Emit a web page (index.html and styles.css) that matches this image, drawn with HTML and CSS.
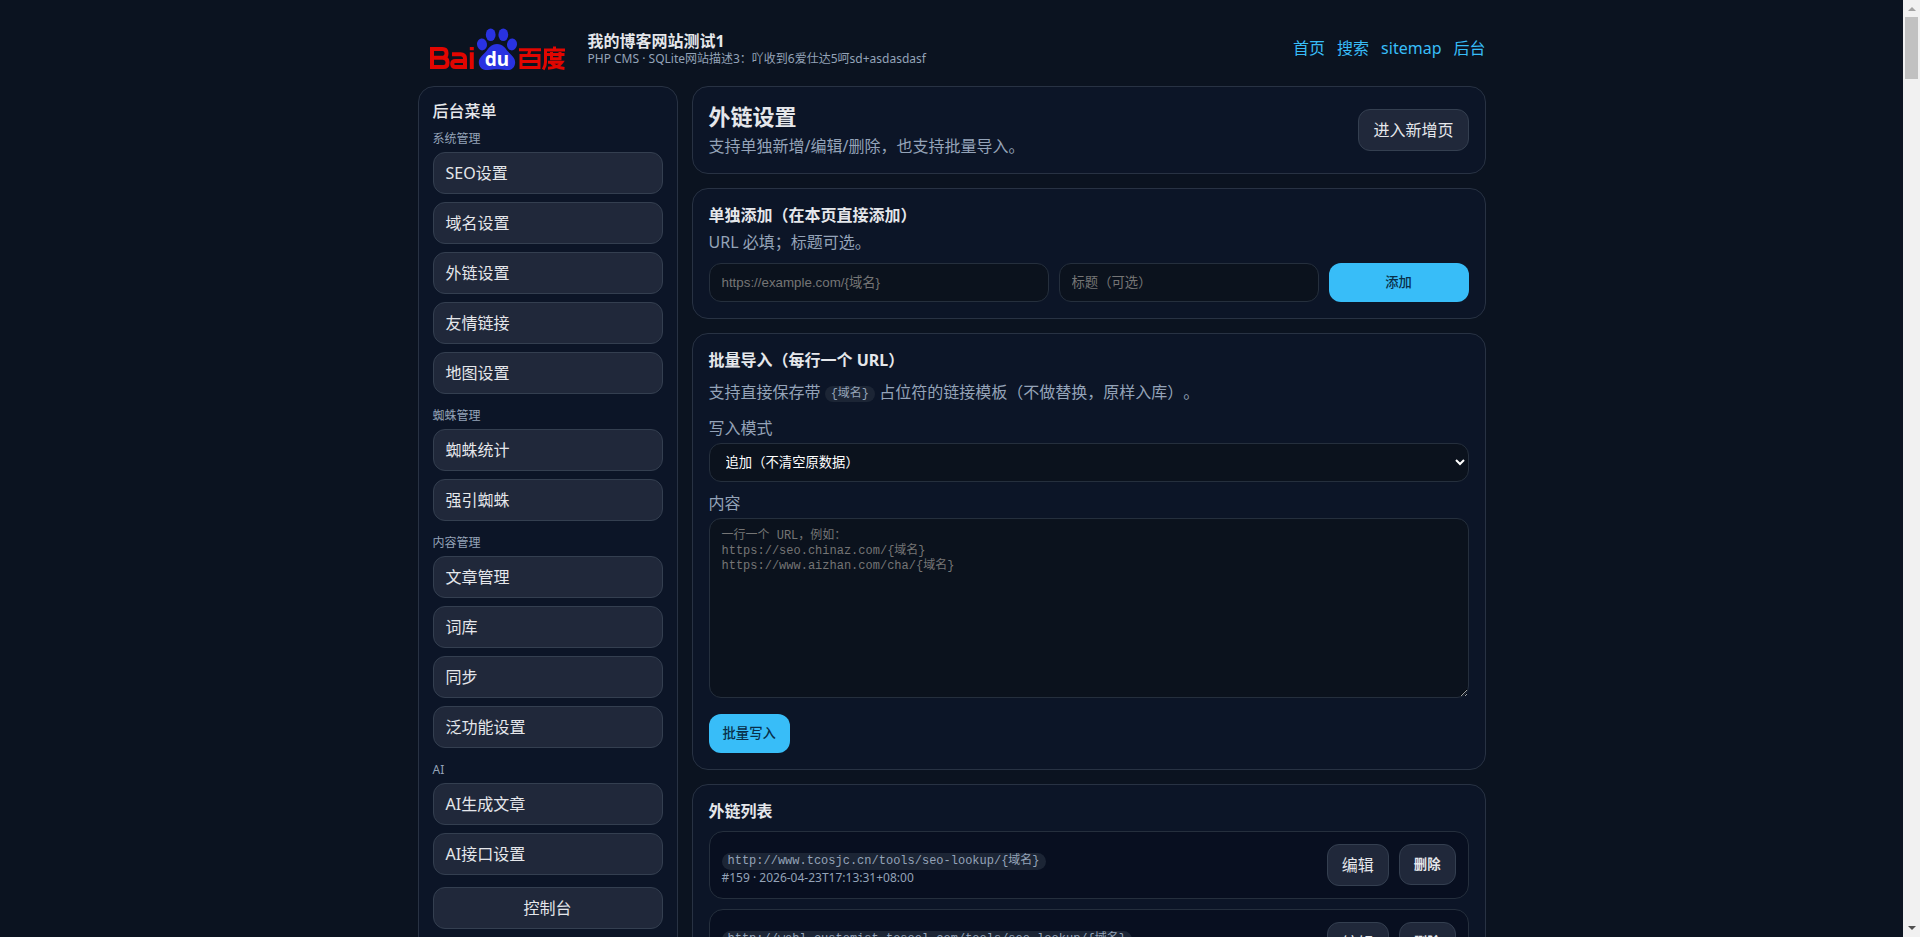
FILE: index.html
```html
<!DOCTYPE html>
<html lang="zh-CN">
<head>
    <meta charset="UTF-8">
    <meta name="viewport" content="width=device-width, initial-scale=1.0">
    <title>外链设置</title>
    <link rel="stylesheet" href="styles.css">
</head>
<body>
    <div class="page">
        <div class="container">
            <header class="header">
                <div class="brand">
                    <svg class="logo" viewBox="0 0 158 74" role="img" aria-label="Baidu 百度">
                        <g fill="#2932e1">
                            <ellipse cx="72.700" cy="22.700" rx="4.900" ry="6.300"/>
                            <ellipse cx="85.300" cy="22.700" rx="4.900" ry="6.300"/>
                            <ellipse cx="64" cy="32.400" rx="5" ry="6" transform="rotate(-8 64 32.400)"/>
                            <ellipse cx="94" cy="32.400" rx="5" ry="6" transform="rotate(8 94 32.400)"/>
                            <path d="M79 32c6 0 8 4 11 7.500 4 4.500 8 7 7 12.500-1 5-5 6.500-9 6-3-.4-5.500-.8-9-.8s-6 .4-9 .8c-4 .5-8-1-9-6-1-5.500 3-8 7-12.500 3-3.500 5-7.500 11-7.500z"/>
                        </g>
                        <text class="logo-du" x="79" y="54" text-anchor="middle">du</text>
                        <g class="logo-red">
                            <path d="M14 37h10.500q4 0 4 4v.5q0 4-3.500 4.200 4.500.3 4.500 4.300v1q0 4-4 4H14zM14 45.700h12"/>
                            <path d="M34 42.300h8.500q4.500 0 4.500 4.500V55H37.500q-3.300 0-3.300-3t3.300-3H47"/>
                            <path d="M53.800 40.300V57M53.800 35v3.200"/>
                        </g>
                        <g class="logo-red logo-hanzi">
                            <path d="M101 37.700h22M112 38l-1.500 5M103 43.500h18v12h-18zM103 49.500h18"/>
                            <path d="M126 38h21M136.500 34.500V38M127.500 38v12q0 4-2.300 7.500M129 42.500h17.500M133.500 40v6.800h8.500V40M130 50.300h14q-3.500 5.400-14 6M133 50.500q4.500 5.200 13.500 6"/>
                        </g>
                    </svg>
                    <div>
                        <div class="site-title">我的博客网站测试1</div>
                        <div class="site-desc">PHP CMS · SQLite网站描述3：吖收到6爱仕达5呵sd+asdasdasf</div>
                    </div>
                </div>
                <nav class="nav">
                    <a href="#">首页</a>
                    <a href="#">搜索</a>
                    <a href="#">sitemap</a>
                    <a href="#">后台</a>
                </nav>
            </header>

            <div class="layout">
                <aside class="card sidebar">
                    <div class="menu-title">后台菜单</div>
                    <div class="menu-group">
                        <div class="menu-label">系统管理</div>
                        <a class="btn" href="#">SEO设置</a>
                        <a class="btn" href="#">域名设置</a>
                        <a class="btn" href="#">外链设置</a>
                        <a class="btn" href="#">友情链接</a>
                        <a class="btn" href="#">地图设置</a>
                    </div>
                    <div class="menu-group">
                        <div class="menu-label">蜘蛛管理</div>
                        <a class="btn" href="#">蜘蛛统计</a>
                        <a class="btn" href="#">强引蜘蛛</a>
                    </div>
                    <div class="menu-group">
                        <div class="menu-label">内容管理</div>
                        <a class="btn" href="#">文章管理</a>
                        <a class="btn" href="#">词库</a>
                        <a class="btn" href="#">同步</a>
                        <a class="btn" href="#">泛功能设置</a>
                    </div>
                    <div class="menu-group">
                        <div class="menu-label">AI</div>
                        <a class="btn" href="#">AI生成文章</a>
                        <a class="btn" href="#">AI接口设置</a>
                    </div>
                    <a class="btn btn-console" href="#">控制台</a>
                </aside>

                <main class="main">
                    <section class="card page-head">
                        <div>
                            <h1>外链设置</h1>
                            <p class="muted">支持单独新增/编辑/删除，也支持批量导入。</p>
                        </div>
                        <a class="btn" href="#">进入新增页</a>
                    </section>

                    <section class="card">
                        <h2>单独添加（在本页直接添加）</h2>
                        <p class="muted add-hint">URL 必填；标题可选。</p>
                        <form class="add-form">
                            <input type="text" name="url" aria-label="URL" placeholder="https://example.com/{域名}">
                            <input type="text" name="title" aria-label="标题" placeholder="标题（可选）">
                            <button class="btn-primary" type="button">添加</button>
                        </form>
                    </section>

                    <section class="card">
                        <h2>批量导入（每行一个 URL）</h2>
                        <p class="muted import-hint">支持直接保存带 <code>{域名}</code> 占位符的链接模板（不做替换，原样入库）。</p>
                        <form class="import-form">
                            <label for="mode">写入模式</label>
                            <select id="mode" name="mode">
                                <option>追加（不清空原数据）</option>
                                <option>覆盖（清空原数据）</option>
                            </select>
                            <label for="content">内容</label>
                            <textarea id="content" name="content" placeholder="一行一个 URL，例如：
https://seo.chinaz.com/{域名}
https://www.aizhan.com/cha/{域名}"></textarea>
                            <button class="btn-primary" type="button">批量写入</button>
                        </form>
                    </section>

                    <section class="card">
                        <h2>外链列表</h2>
                        <div class="link-list">
                            <div class="link-item">
                                <div class="link-info">
                                    <code>http://www.tcosjc.cn/tools/seo-lookup/{域名}</code>
                                    <div class="link-meta">#159 · 2026-04-23T17:13:31+08:00</div>
                                </div>
                                <a class="btn" href="#">编辑</a>
                                <button class="btn btn-delete" type="button">删除</button>
                            </div>
                            <div class="link-item">
                                <div class="link-info">
                                    <code>http://webl.customist.tosool.com/tools/seo-lookup/{域名}</code>
                                    <div class="link-meta">#158 · 2026-04-23T17:13:31+08:00</div>
                                </div>
                                <a class="btn" href="#">编辑</a>
                                <button class="btn btn-delete" type="button">删除</button>
                            </div>
                        </div>
                    </section>
                </main>
            </div>
        </div>
    </div>
    <div class="scrollbar">
        <span class="arrow arrow-up"></span>
        <span class="thumb"></span>
        <span class="arrow arrow-down"></span>
    </div>
</body>
</html>
```
FILE: styles.css
```css
* {
    box-sizing: border-box;
}

body {
    margin: 0;
    display: flex;
    height: 100vh;
    background: #0b1320;
    color: #e5e7eb;
    font-family: "Noto Sans", "Noto Sans CJK SC", sans-serif;
    font-size: 16px;
    line-height: 22px;
    text-spacing-trim: space-all;
}

a {
    color: #38bdf8;
    text-decoration: none;
}

h1, h2, p {
    margin: 0;
}

h1 {
    font-size: 22px;
    line-height: 26px;
    margin-bottom: 6px;
}

h2 {
    font-size: 16px;
    line-height: 20px;
}

.page {
    flex: 1;
    min-width: 0;
    overflow-y: auto;
    scrollbar-width: none;
}

.container {
    max-width: 1100px;
    margin: 0 auto;
    padding: 12px 16px;
}

.header {
    display: flex;
    justify-content: space-between;
    align-items: center;
    min-height: 74px;
}

.brand {
    display: flex;
    align-items: center;
    gap: 12px;
}

.logo {
    width: 158px;
    height: 74px;
}

.logo-red {
    fill: none;
    stroke: #e10601;
    stroke-width: 4;
}

.logo-hanzi {
    stroke-width: 3;
}

.logo-du {
    fill: #fff;
    font-family: "Noto Sans", sans-serif;
    font-size: 19px;
    font-weight: 700;
}

.site-title {
    font-weight: 700;
    line-height: 20px;
}

.site-desc {
    color: #94a3b8;
    font-size: 12px;
    line-height: 16px;
}

.nav {
    display: flex;
    gap: 12px;
    padding-bottom: 2px;
}

.layout {
    display: grid;
    grid-template-columns: 260px 1fr;
    gap: 14px;
}

.main {
    display: grid;
    gap: 14px;
    align-content: start;
    min-width: 0;
}

.card {
    padding: 16px;
    background: #0c1527;
    border: 1px solid #283243;
    border-radius: 16px;
}

.muted {
    color: #94a3b8;
}

/* buttons */

.btn {
    padding: 10px 14px;
    background: #20283a;
    border: 1px solid #343f50;
    border-radius: 12px;
    color: #e5e7eb;
    line-height: 20px;
}

.btn-primary {
    padding: 10px 14px;
    background: #38bdf8;
    border: 0;
    border-radius: 12px;
    color: #082f49;
    font-family: inherit;
    font-weight: 500;
    line-height: 19px;
}

.btn-delete {
    font-family: inherit;
    font-weight: 700;
    line-height: 19px;
}

/* sidebar */

.sidebar {
    padding: 14px;
}

.menu-title {
    margin-bottom: 12px;
    font-weight: 500;
    line-height: 20px;
}

.menu-group {
    display: grid;
    gap: 8px;
    margin-bottom: 16px;
}

.menu-group:last-of-type {
    margin-bottom: 12px;
}

.menu-group .btn {
    padding: 10px 12px;
}

.menu-label {
    color: #94a3b8;
    font-size: 12px;
    line-height: 11px;
}

.btn-console {
    display: block;
    text-align: center;
}

/* forms */

.add-hint {
    margin: 6px 0 10px;
}

.page-head {
    display: flex;
    justify-content: space-between;
    align-items: center;
}

.add-form {
    display: grid;
    grid-template-columns: 1fr 260px 140px;
    gap: 10px;
}

input, select, textarea {
    width: 100%;
    padding: 10px 12px;
    background: #0b121d;
    border: 1px solid #252f3d;
    border-radius: 12px;
    color: #e5e7eb;
    font-family: "Liberation Sans", "Noto Sans CJK SC", sans-serif;
    line-height: 17px;
}

input, select {
    height: 39px;
}

::placeholder {
    color: #757575;
}

select {
    color: #fff;
}

textarea {
    display: block;
    height: 180px;
    margin-bottom: 16px;
    font-family: "Liberation Mono", "Noto Sans CJK SC", monospace;
    font-size: 12px;
    line-height: 15px;
    resize: vertical;
}

.import-hint {
    margin: 11px 0 14px;
}

.import-form label {
    display: block;
    margin-bottom: 4px;
    color: #94a3b8;
}

.import-form select {
    display: block;
    margin-bottom: 10px;
}

code {
    padding: 1px 6px;
    background: #1c2535;
    border-radius: 999px;
    color: #94a3b8;
    font-family: "Liberation Mono", "Noto Sans CJK SC", monospace;
    font-size: 12px;
    line-height: 15px;
}

.import-hint code {
    vertical-align: 1px;
}

/* link list */

.link-list {
    display: grid;
    gap: 10px;
    margin-top: 10px;
}

.link-item {
    display: flex;
    align-items: flex-start;
    gap: 10px;
    padding: 12px;
    background: #080f20;
    border: 1px solid #252f3d;
    border-radius: 14px;
}

.link-info {
    display: flex;
    flex-direction: column;
    align-items: flex-start;
    align-self: flex-end;
    flex: 1;
    min-width: 0;
}

.link-meta {
    color: #94a3b8;
    font-size: 12px;
    line-height: 16px;
}

/* scrollbar column */

.scrollbar {
    display: flex;
    flex-direction: column;
    align-items: center;
    width: 17px;
    padding: 7px 0;
    background: #f1f1f1;
}

.thumb {
    width: 13px;
    height: 62px;
    margin-top: 6px;
    background: #c1c1c1;
}

.arrow {
    border: 4px solid transparent;
}

.arrow-up {
    border-top: 0;
    border-bottom-color: #a3a3a3;
}

.arrow-down {
    margin-top: auto;
    border-bottom: 0;
    border-top-color: #505050;
}
```
